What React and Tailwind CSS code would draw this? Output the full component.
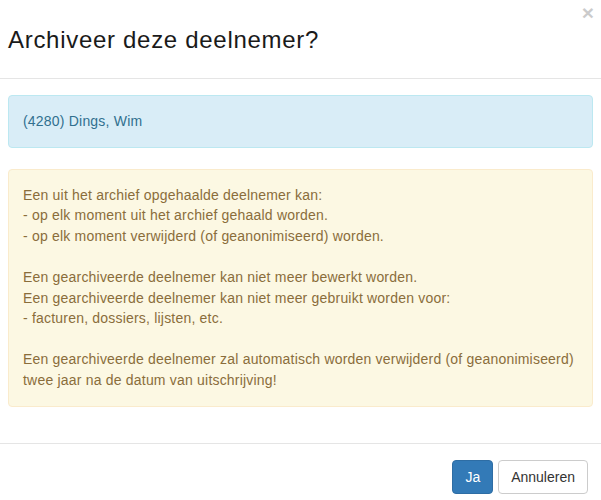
import React from 'react'

const WarningLines = [
  'Een uit het archief opgehaalde deelnemer kan:',
  '- op elk moment uit het archief gehaald worden.',
  '- op elk moment verwijderd (of geanonimiseerd) worden.',
  '',
  'Een gearchiveerde deelnemer kan niet meer bewerkt worden.',
  'Een gearchiveerde deelnemer kan niet meer gebruikt worden voor:',
  '- facturen, dossiers, lijsten, etc.',
  '',
  'Een gearchiveerde deelnemer zal automatisch worden verwijderd (of geanonimiseerd)',
  'twee jaar na de datum van uitschrijving!',
]

export default function App() {
  return (
    <div className="w-[601px] h-[500px] bg-white overflow-hidden font-['Liberation_Sans',Arial,sans-serif] text-[14px] text-[#333]">
      {/* header */}
      <div className="relative border-b border-[#e5e5e5] pt-[26px] pb-[25px] px-2">
        <button className="absolute right-[7px] top-[2px] text-[21px] font-bold leading-none text-black opacity-20">
          ×
        </button>
        <h3 className="text-[24px] leading-[27px] font-normal tracking-[0.7px] text-[#1a1a1a]">Archiveer deze deelnemer?</h3>
      </div>

      {/* body */}
      <div className="px-2 pt-4 pb-[36px] tracking-[0.2px]">
        <div className="border border-[#bce8f1] bg-[#d9edf7] text-[#31708f] rounded px-[14px] py-[15px] leading-[20.6px] mb-[21px]">
          (4280) Dings, Wim
        </div>
        <div className="border border-[#faebcc] bg-[#fcf8e3] text-[#8a6d3b] rounded px-[14px] py-[15px] leading-[20.6px]">
          {WarningLines.map((line, i) => (
            <div key={i} className="h-[20.6px] whitespace-nowrap">{line}</div>
          ))}
        </div>
      </div>

      {/* footer */}
      <div className="border-t border-[#e5e5e5] pt-4 pr-[13px] flex justify-end gap-[5px]">
        <button className="h-[34px] px-3 rounded border border-[#2e6da4] bg-[#337ab7] text-white leading-5">
          Ja
        </button>
        <button className="h-[34px] px-3 rounded border border-[#ccc] bg-white text-[#333] leading-5">
          Annuleren
        </button>
      </div>
    </div>
  )
}
